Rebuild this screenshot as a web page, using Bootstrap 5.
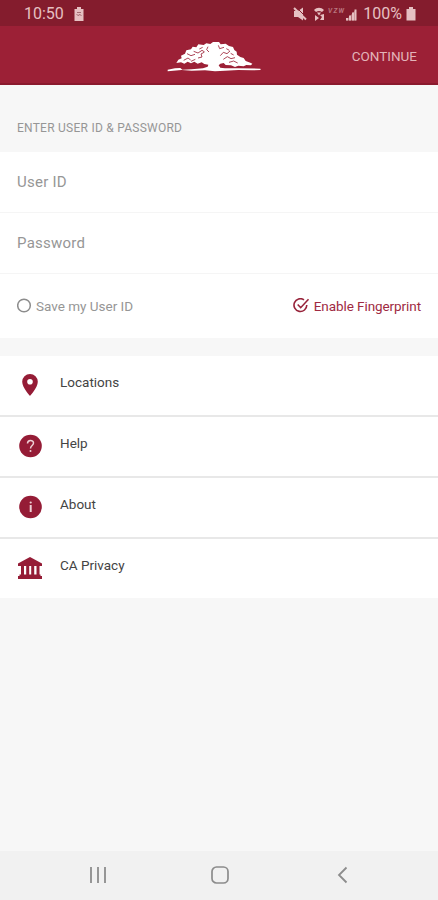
<!DOCTYPE html>
<html lang="en">
<head>
<meta charset="utf-8">
<meta name="viewport" content="width=device-width, initial-scale=1">
<title>Sign in</title>
<link rel="stylesheet" href="https://cdn.jsdelivr.net/npm/bootstrap@5.3.0/dist/css/bootstrap.min.css">
<style>
body{font-family:Roboto,"Liberation Sans",sans-serif;background:#f7f7f7;color:#444;height:900px;overflow:hidden;line-height:20px}
svg{display:block;flex:none}
.status{height:26px;background:#841c2d;color:#e6c0c2;font-size:16px;padding:2px 22px 0 24px}
.appbar{height:59px;background:#9c2036;border-bottom:2px solid #8a1a2e;padding:1px 21px 0 167px}
.appbar .go{color:#e3b4b9;font-size:13.5px;letter-spacing:0;margin-top:1px}
.heading{height:67px;padding:33px 17px 0;font-size:12px;letter-spacing:.25px;color:#969696}
.entry{height:61px;padding:0 17px;border-bottom:1px solid #f5f5f5;font-size:15px;letter-spacing:.25px;color:#969696}
.opts{height:64px;padding:0 17px;font-size:13.5px;color:#969696}
.finger{letter-spacing:-.08px}
.brand-red{color:#a02a42}
.menu{margin-top:18px}
.menu-row{height:61px;padding:0 17px 2px;border-bottom:2px solid #e8e8e8;font-size:13.5px;letter-spacing:0;color:#444}
.menu-row:last-child{border-bottom:0;height:59px}
.menu-row span{margin:-5px 0 0 17px}
.menu-row svg{color:#951c36}
.softkeys{height:49px;background:#f1f1f1;padding:0 90px 1px 89px}
</style>
</head>
<body class="d-flex flex-column">
<header>
  <div class="status d-flex align-items-center">
    <span class="clock">10:50</span>
    <svg class="ms-2" width="14" height="16" viewBox="0 0 14 16"><path d="M5 1h4v2h2.500v12h-9V3H5z" fill="#e6c0c2"/><path d="M4.500 8l2 2 1-2 2 2M5 6.500h4" stroke="#a66c73" fill="none"/></svg>
    <div class="d-flex align-items-center ms-auto">
      <svg class="me-1" width="66" height="16" viewBox="0 0 66 16" fill="#e6c0c2">
        <path d="M1 5h4L10 1.500v13L5 11H1z"/><path d="M3 1l11 11" stroke="#841c2d" stroke-width="1"/><path d="M1 2l12 11.500" stroke="#e6c0c2" stroke-width="2"/>
        <path d="M21 4c3-3 7-3 10 0l-2 2c-2-1.500-4-1.500-6 0zM24 6.500h4l-2 3zM22 9l4 3-4 3zM31 8v6h-4l2-3-2-2z"/>
        <text x="35" y="7" font-size="6.500" font-style="italic" font-weight="bold" textLength="16" fill="#b9767f">VZW</text>
        <path d="M53 14.500v-2.500h2v2.500zM56 14.500V9.500h2v5zM59 14.500V6.500h2v8zM61.500 14.500V3.500h2v11z"/><path d="M53 14.500L63 3.500v11z" opacity=".5"/>
      </svg>
      <span>100%</span>
      <svg class="ms-1" width="10" height="16" viewBox="1 0 10 16"><path d="M4 1h4v2h2.500v11.500h-9V3H4z" fill="#e6c0c2"/></svg>
    </div>
  </div>
  <div class="appbar d-flex align-items-center justify-content-between">
    <svg class="mt-1" width="94" height="30" viewBox="36 33 282 90">
      <path fill="#fff" d="M64 96L70 86 80 82 78 74 90 68 94 58 108 55 113 47 124 49 130 40 146 42 154 37 166 39 174 33 192 33 197 40 212 38 222 45 234 48 238 57 245 62 246 71 256 78 266 81 272 90 286 95 292 98 288 103 274 102 266 106 250 104 240 108 228 103 212 102 206 96 196 98 191 103 196 110 210 112 250 112 316 113 317 117 290 118 250 117 210 119 180 121 150 118 110 119 80 117 38 121 38 116 60 112 76 111 82 116 110 115 144 112 158 107 160 101 148 99 140 94 128 98 118 92 108 97 98 92 88 98 78 94z"/>
      <path fill="none" stroke="#9c2036" stroke-width="2.500" d="M96 68l12 6 12-4M116 61l13 5 12-8 8 5M129 81l12-3-3-9 9-5M159 47l-4 9 7 7M190 43l4 10 13-4M196 74l9-10 11 4 9-8M205 85l12-8 11 6 12-3M227 67l9 5M222 94l14-4 12 6M86 88l13-7 8 6M108 91l13-6M214 53l9 5M143 49l-10 5"/>
    </svg>
    <span class="go">CONTINUE</span>
  </div>
</header>
<main class="flex-grow-1">
  <div class="heading">ENTER USER ID &amp; PASSWORD</div>
  <section class="bg-white">
    <div class="entry d-flex align-items-center">User ID</div>
    <div class="entry d-flex align-items-center">Password</div>
    <div class="opts d-flex align-items-center justify-content-between">
      <div class="d-flex align-items-center"><svg width="15" height="16" viewBox="0 0 15 16"><circle cx="7" cy="7.500" r="6.300" fill="none" stroke="#8c8c8c" stroke-width="1.500"/></svg><span class="save ms-1">Save my User ID</span></div>
      <div class="brand-red d-flex align-items-center"><svg width="17" height="16" viewBox="0 0 17 16" fill="none" stroke="#98243b" stroke-width="1.600"><path d="M11 1.800A6.400 6.400 0 1 0 13.800 7M4.700 6.500l3 3.200L15.500 1.300"/></svg><span class="finger ms-1">Enable Fingerprint</span></div>
    </div>
  </section>
  <nav class="menu bg-white">
    <div class="menu-row d-flex align-items-center"><svg width="26" height="26" viewBox="0 0 26 26"><path fill="currentColor" fill-rule="evenodd" d="M13 2a7.800 7.800 0 0 0-7.800 7.800C5.200 15.500 13 24 13 24s7.800-8.500 7.800-14.200A7.800 7.800 0 0 0 13 2zm0 5a2.800 2.800 0 1 1 0 5.600A2.800 2.800 0 0 1 13 7z"/></svg><span>Locations</span></div>
    <div class="menu-row d-flex align-items-center"><svg width="26" height="26" viewBox="0 0 26 26"><circle cx="13.500" cy="13" r="11.300" fill="currentColor"/><path d="M10.500 10.500c0-4 6-4 6-.5 0 2.500-3 2.500-3 5.500" fill="none" stroke="#eed0d5" stroke-width="1.500"/><circle cx="13.500" cy="18" r="1" fill="#eed0d5"/></svg><span>Help</span></div>
    <div class="menu-row d-flex align-items-center"><svg width="26" height="26" viewBox="0 0 26 26"><circle cx="13.500" cy="13" r="11.300" fill="currentColor"/><path d="M13.700 11v7" fill="none" stroke="#eed0d5" stroke-width="2"/><circle cx="13.700" cy="8.500" r="1.100" fill="#eed0d5"/></svg><span>About</span></div>
    <div class="menu-row d-flex align-items-center"><svg width="26" height="26" viewBox="0 0 26 26"><path fill="currentColor" d="M13 2l12 6.500V11H1V8.500zM4 11h3v9H4zM9.200 11h3v9h-3zM14.200 11h3v9h-3zM19.500 11h3v9h-3zM2.500 19.500h21V21H25v3H1v-3h1.500z"/></svg><span>CA Privacy</span></div>
  </nav>
</main>
<footer class="softkeys d-flex align-items-center justify-content-between">
  <svg width="18" height="18" viewBox="0 0 18 18" stroke="#969696" stroke-width="2"><path d="M2 1v16M9 1v16M16 1v16"/></svg>
  <svg width="22" height="20" viewBox="1 0 22 20"><rect x="2" y="2" width="16" height="16" rx="4.500" fill="none" stroke="#8c8c8c" stroke-width="1.700"/></svg>
  <svg width="12" height="18" viewBox="0 0 12 18"><path d="M10.500 1.500L3 9l7.500 7.500" fill="none" stroke="#8c8c8c" stroke-width="1.800"/></svg>
</footer>
<script src="https://cdn.jsdelivr.net/npm/bootstrap@5.3.0/dist/js/bootstrap.bundle.min.js"></script>
</body>
</html>
